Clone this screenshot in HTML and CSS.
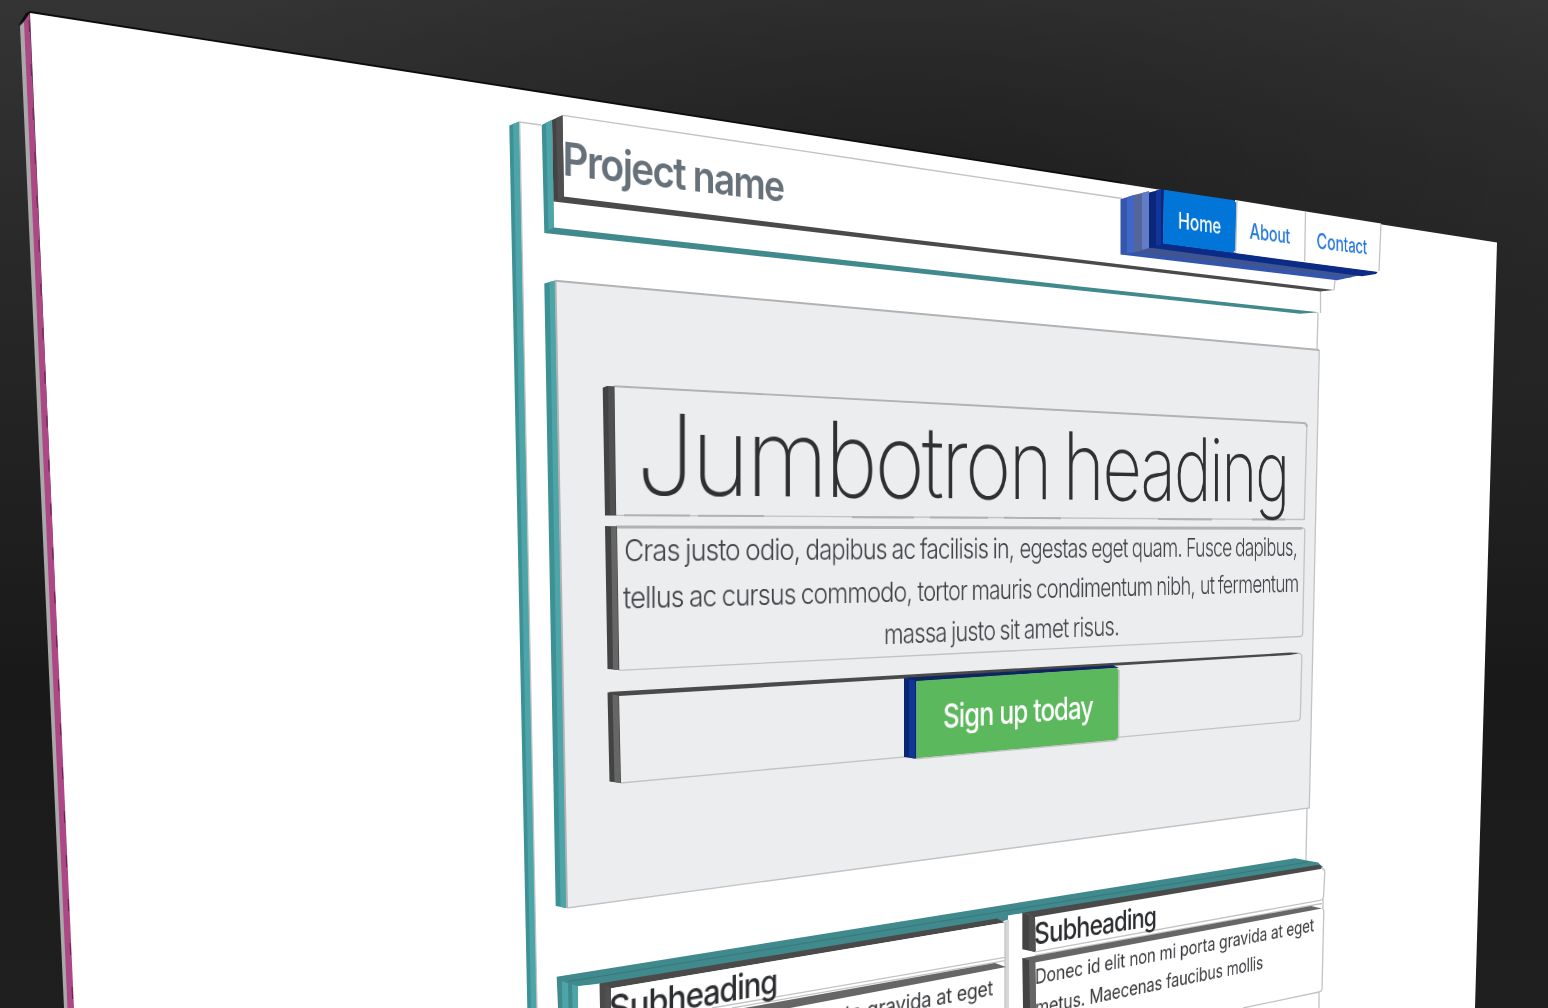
FILE: index.html
```
<!DOCTYPE html>
<html lang="en">
<head>
<meta charset="utf-8">
<title>Project name – 3D view</title>
<link rel="stylesheet" href="styles.css">
</head>
<body>
<main class="scene">
<svg class="solids" viewBox="0 0 1548 1008" width="1548" height="1008" aria-hidden="true">
  <!-- page -->
  <polygon class="void" points="18,26 26,13 30,11 1122,182 1122,190 30,15"/>
  <polygon class="paper-side" points="20,26 25,21 69,1008 64,1008"/>
  <polygon class="page" points="30,13 1497,242.5 1475,1008 73,1008"/>
  <polygon class="magenta" points="24,22 29.5,13 74,1008 67.5,1008"/>
  <path class="magenta-edge" d="M29,20 L73,1008"/>
  <!-- container -->
  <path class="line" d="M519,122 L541,125 M1318,313 L1317,350 M1307,808 L1306,860"/>
  <polygon class="teal-dark" points="509.3,125.5 519.3,121.5 537,1008 527.3,1008"/>
  <polygon class="teal" points="513,124 519,121.7 536.5,1008 531,1008"/>
  <path class="line" d="M519.7,122 L537,1008"/>
  <!-- header -->
  <polygon class="white" points="552,120 1320,240 1320,312 554,228"/>
  <polygon class="teal-dark" points="541.7,125 551.7,120 554,229 544.3,233"/>
  <polygon class="teal" points="546,123 551.7,120 554,228 548.5,230"/>
  <polygon class="teal-floor" points="544,233 554,227.5 900,266.2 1080,286.5 1319,312.3 1300,313.8 1080,290.5 900,271.3"/>
  <path class="line" d="M1320.5,291 V313"/>
  <polygon class="white" points="563,115.5 1335,231 1334,290 563.5,197"/>
  <path class="line" d="M563,115.3 L900,165.5 L1122,198.5 M1335,280 L1334,290.5"/>
  <polygon class="gray-dark" points="552,120 562.5,115.3 564,198 553.5,201.5"/>
  <polygon class="gray-mid" points="556,118.3 562.5,115.3 564,197 558,199"/>
  <polygon class="gray-floor" points="553.5,201.5 563.5,196.5 900,238 1080,259.5 1334,290 1320,291.5 1080,263 900,242.2"/>
  <!-- navigation -->
  <polygon class="nav-floor-a" points="1120.5,254.5 1134,251 1352,277 1337,280.3"/>
  <polygon class="nav-floor-b" points="1134,252.5 1149,246 1365,274 1350,277.5"/>
  <polygon class="nav-floor-c" points="1149,247.5 1163,243 1378,271.5 1376,274 1362,276.2"/>
  <polygon class="nav-a" points="1120.5,199.3 1134,195 1134,252.5 1120.5,254.5"/>
  <polygon class="nav-a-lit" points="1127,197.2 1134,195 1134,252.5 1127,253.5"/>
  <polygon class="nav-b" points="1134,195 1149,191.3 1149,248 1134,252"/>
  <polygon class="nav-b-lit" points="1142,193 1149,191.3 1149,248 1142,250"/>
  <polygon class="nav-c" points="1149,192.5 1164,188.8 1163.5,244.5 1149,248"/>
  <polygon class="nav-c-lit" points="1156,190.5 1161,189.3 1161,245 1156,246"/>
  <polygon class="white" points="1235,200 1381,223.5 1378.5,272 1235,253"/>
  <polygon class="home" points="1164,189.7 1234,200.3 1236.5,203 1235.5,250 1233,252.8 1163,243.5"/>
  <path class="line" d="M1237,201 L1235.7,253 M1305.5,212 L1304.7,261 M1381,224 L1379,271"/>
  <!-- jumbotron -->
  <polygon class="jumbo" points="555,281 1319,350 1309,808 567,908"/>
  <path class="line strong" d="M555,280.8 L1319,350"/>
  <path class="line" d="M1319.3,350 L1309.3,808 L567,908"/>
  <polygon class="teal-dark" points="544.3,283.5 555,280.5 567,908 555.7,906"/>
  <polygon class="teal" points="549.5,282 554.5,280.7 566,908 560.5,907"/>
  <path class="line strong" d="M555.5,281 L567,908"/>
  <!-- heading box -->
  <path class="line strong" d="M614,386.3 L1304,423 Q1307,423.5 1306.8,427"/>
  <path class="line" d="M1306.8,427 L1304.3,519.5 L616,515.3"/>
  <path class="line strong" d="M624,515.3 L690,515.5 M698,515.7 L764,516 M852,517.2 L914,517.5 M930,517.5 L988,517.8 M1004,517.8 L1061,518.3 M1158,519 L1212,519.5 M1252,519.5 L1285,519.5"/>
  <polygon class="gray-dark" points="602.7,387.8 607,386 614.5,386.5 616.2,515.5 605,515.5"/>
  <polygon class="gray-mid" points="608,387 614,386.5 615.5,515 610,515"/>
  <!-- lead box -->
  <path class="line heavy" d="M616,527 L1302,528.3"/>
  <path class="line" d="M1302,528 Q1305,528 1304.8,531 L1302.6,634 Q1302.4,636.5 1300,636.5 L619,670.3"/>
  <polygon class="gray-dark" points="605,526 617,526.5 619.3,670 607.5,669"/>
  <polygon class="gray-lit" points="611,526.5 616.5,526.5 618.5,670 613,669.5"/>
  <!-- action box -->
  <polygon class="gray-ceiling" points="607.5,692 1290,652.6 1301,653 1290,655 619,696"/>
  <path class="line" d="M1298,653.3 Q1302,653.5 1301.8,657 L1300.3,718 Q1300,720.5 1297,720.9 L620.5,783"/>
  <polygon class="gray-dark" points="607.5,692.5 619,694 621,783 609.5,781.5"/>
  <polygon class="gray-lit" points="612.5,694.5 618.5,695.5 620.3,783 614.5,782"/>
  <polygon class="navy-ceiling" points="904,677.8 1113,665.3 1119,668 916,681.5"/>
  <polygon class="navy" points="904,678 916.5,680 916.5,758.7 904,757"/>
  <polygon class="navy-lit" points="909,679.5 915,680 915,758.5 909,757.7"/>
  <polygon class="green" points="916.5,681 1116,667.8 1118.7,670 1118,737.5 1115.5,740 916.5,758.3"/>
  <path class="line" d="M916.5,758.8 L1115,740.5 Q1118.6,740 1118.7,737 L1119.2,670"/>
  <!-- content row -->
  <polygon class="teal-floor" points="556.7,976.8 1295,858.3 1318,862.5 1323,867 1023,914 1004,921 600,985 578,986 578,1008 558,1008"/>
  <path class="teal-rib" d="M568,981.5 L1308,862"/>
  <polygon class="teal" points="562,981 568,983.5 568.5,1008 562.3,1008"/>
  <polygon class="teal" points="572,984.5 578,986 578.3,1008 572.5,1008"/>
  <polygon class="white" points="578,986.3 600,983.5 600,1008 578.3,1008"/>
  <polygon class="white" points="1008,915.5 1023,913 1023,1008 1008,1008"/>
  <path class="line wide" d="M1007,920 V1008"/>
  <!-- left column -->
  <polygon class="gray-ceiling" points="599.5,983.5 800,951 997,918.5 1005,922.5 800,957 611,988.5 611,1008 600,1008"/>
  <polygon class="gray-mid" points="605,986 611,988 611.3,1008 605.3,1008"/>
  <polygon class="white" points="611,988.3 1005,922.5 1005,1008 611,1008"/>
  <path class="line" d="M1005,922 V1008 M1005,957.3 L712,1008 M1005,960.7 L732,1008"/>
  <polygon class="gray-lit" points="744,1008 995,963 1006,967 790,1008"/>
  <!-- right column -->
  <polygon class="gray-ceiling" points="1022.3,912.8 1319,864.8 1323.5,868.5 1035,917"/>
  <polygon class="gray-dark" points="1022.3,912.7 1035,916.5 1035.7,952 1022.3,949.3"/>
  <polygon class="gray-mid" points="1029,915 1035,916.5 1035.5,952 1029,950.5"/>
  <path class="line" d="M1321,868 Q1325,869 1324.8,873 L1323.5,897 Q1323,900 1320,900.3 L1035,951.8 M1035,955.5 L1322,903.5 M1323,899 V908"/>
  <polygon class="gray-lit" points="1022.3,958.3 1311,906 1322,908.5 1035,962.5"/>
  <polygon class="gray-dark" points="1022.3,958 1035.2,962 1036,1008 1023,1008"/>
  <polygon class="gray-lit" points="1029,960 1035.2,962 1036,1008 1030,1008"/>
  <path class="line" d="M1322,907.5 Q1324,909 1323.8,912 L1322,989 Q1321.7,991.5 1319,992 L1243,1008 M1319,992 V1008"/>
</svg>

<header>
  <h3 class="plane title" data-quad="562.5,141.5 783.5,171 783.5,201.8 562.5,174.8">Project name</h3>
  <nav>
    <span class="plane nav on" data-quad="1178,212.5 1221,218.9 1221,234.1 1178,228.5">Home</span>
    <span class="plane nav" data-quad="1249.5,223.3 1290,229.3 1290,243.8 1249.5,238.7">About</span>
    <span class="plane nav" data-quad="1316.5,233.2 1367,240.4 1367,254.5 1316.5,248.6">Contact</span>
  </nav>
</header>
<section>
  <h1 class="plane display" data-quad="636,411.8 1288,441.2 1288,502.1 636,494.7">Jumbotron heading</h1>
  <p>
    <span class="plane lead" data-quad="624,539 800,538.7 800,559.9 624,561.3">Cras justo odio,</span>
    <span class="plane lead" data-quad="805.5,538.7 1014,538.3 1014,558.2 805.5,559.9">dapibus ac facilisis in,</span>
    <span class="plane lead" data-quad="1019.5,538.3 1182,538 1182,556.8 1019.5,558.2">egestas eget quam.</span>
    <span class="plane lead" data-quad="1186,538 1297,537.8 1297,555.9 1186,556.8">Fusce dapibus,</span>
    <span class="plane lead" data-quad="623,586.5 912,581.3 912,601.4 623,608.6">tellus ac cursus commodo,</span>
    <span class="plane lead" data-quad="917.5,581.2 1195,576.2 1195,594.4 917.5,601.3">tortor mauris condimentum nibh,</span>
    <span class="plane lead" data-quad="1200,576.1 1298.5,574.3 1298.5,591.8 1200,594.2">ut fermentum</span>
    <span class="plane lead" data-quad="884,624 1119,616.2 1119,635.3 884,644.3">massa justo sit amet risus.</span>
  </p>
  <span class="plane action" data-quad="943,705.3 1093,696.4 1093,718.7 943,728.8">Sign up today</span>
</section>
<section>
  <h4 class="plane sub" data-quad="608.5,996 777,968 777,992.5 608.5,1023">Subheading</h4>
  <p class="plane body" data-quad="610,1047 993,980 993,995.5 610,1065">Donec id elit non mi porta gravida at eget</p>
  <h4 class="plane sub" data-quad="1034,923.2 1156,905.5 1156,925.3 1034,944.8">Subheading</h4>
  <p class="plane body" data-quad="1035,970 1314,918.3 1314,931.5 1035,984.6">Donec id elit non mi porta gravida at eget</p>
  <p class="plane body" data-quad="1035,1000.8 1263,955.5 1263,969 1035,1015.7">metus. Maecenas faucibus mollis</p>
</section>
</main>
<script src="planes.js"></script>
</body>
</html>
```
FILE: styles.css
```
* { box-sizing: border-box; }
body { margin: 0; background: #1c1c1c; font-family: Inter, "Liberation Sans", sans-serif; }
.scene {
  position: relative;
  width: 1548px;
  height: 1008px;
  overflow: hidden;
  background:
    radial-gradient(ellipse 800px 330px at 900px 190px, rgba(0,0,0,.3), rgba(0,0,0,0)),
    linear-gradient(#343434 0%, #292929 25%, #191919 68%, #1f1f1f 100%);
}
.solids { display: block; }

.void { fill: #0c0c0c; }
.page, .white { fill: #fff; }
.paper-side { fill: #a9a9a9; }
.magenta { fill: #ad4785; }
.magenta-edge { stroke: #5f2549; stroke-width: 1; stroke-dasharray: 12 32; fill: none; }
.teal { fill: #4ca5a9; }
.teal-dark { fill: #3d9094; }
.teal-floor { fill: #40898c; }
.teal-rib { fill: none; stroke: #38797c; stroke-width: 1; }
.gray-dark { fill: #434343; }
.gray-mid { fill: #505050; }
.gray-lit { fill: #666; }
.gray-floor, .gray-ceiling { fill: #4a4a4a; }
.nav-a { fill: #3557ab; }
.nav-a-lit { fill: #4066c8; }
.nav-b { fill: #53659b; }
.nav-b-lit { fill: #627cc6; }
.nav-c { fill: #0b277c; }
.nav-c-lit { fill: #10369c; }
.nav-floor-a { fill: #3355ad; }
.nav-floor-b { fill: #3f5592; }
.nav-floor-c { fill: #0b2b86; }
.home { fill: #0275d8; }
.jumbo { fill: #ecedef; }
.navy { fill: #0b2671; }
.navy-lit { fill: #103597; }
.navy-ceiling { fill: #0e2560; }
.green { fill: #5cb85c; }
.line { fill: none; stroke: #c2c3c4; stroke-width: 1.3; }
.strong { stroke: #b0b2b3; stroke-width: 1.9; }
.heavy { stroke: #b0b3b3; stroke-width: 3; }
.wide { stroke: #d6d6d6; stroke-width: 4; }

/* Every label lies on its own plane; planes.js sets its matrix. */
.plane {
  position: absolute;
  left: 0;
  top: 0;
  margin: 0;
  line-height: 1;
  white-space: nowrap;
  transform-origin: 0 0;
  font-weight: 400;
}
.title { font-size: 46px; font-weight: 600; letter-spacing: -.04em; color: #66717a; }
.nav { font-size: 21px; font-weight: 500; letter-spacing: -.01em; color: #2578dc; }
.on { color: #fff; }
.display { font-size: 110px; font-weight: 200; letter-spacing: -.03em; word-spacing: -.08em; color: #2e3032; }
.lead { font-size: 29px; font-weight: 300; letter-spacing: -.035em; word-spacing: -.04em; color: #404346; }
.action { font-size: 32px; font-weight: 500; letter-spacing: -.035em; color: #fff; }
.sub { font-size: 31px; font-weight: 500; letter-spacing: -.035em; color: #2b2d30; }
.body { font-size: 20px; letter-spacing: -.01em; color: #36383b; }
```
FILE: planes.js
```
// Projects each label so that its cap line and baseline land on the
// four corners in data-quad (top left, top right, bottom right, bottom left).
const CAP = 0.137, BASE = 0.864;

function squareToQuad(p) {
  const [a, b, c, d] = p;
  const dx1 = b[0] - c[0], dx2 = d[0] - c[0], sx = a[0] - b[0] + c[0] - d[0];
  const dy1 = b[1] - c[1], dy2 = d[1] - c[1], sy = a[1] - b[1] + c[1] - d[1];
  const det = dx1 * dy2 - dx2 * dy1;
  const g = (sx * dy2 - dx2 * sy) / det;
  const h = (dx1 * sy - sx * dy1) / det;
  return [
    [b[0] - a[0] + g * b[0], d[0] - a[0] + h * d[0], a[0]],
    [b[1] - a[1] + g * b[1], d[1] - a[1] + h * d[1], a[1]],
    [g, h, 1]
  ];
}

for (const el of document.querySelectorAll('.plane')) {
  const quad = el.dataset.quad.split(' ').map(s => s.split(',').map(Number));
  const m = squareToQuad(quad);
  const size = parseFloat(getComputedStyle(el).fontSize);
  const w = el.getBoundingClientRect().width;
  const top = CAP * size, height = (BASE - CAP) * size;
  const r = m.map(([x, y, k]) => [x / w, y / height, k - y * top / height]);
  const n = r[2][2];
  const q = r.map(row => row.map(v => v / n));
  el.style.transform = `matrix3d(${[
    q[0][0], q[1][0], 0, q[2][0],
    q[0][1], q[1][1], 0, q[2][1],
    0, 0, 1, 0,
    q[0][2], q[1][2], 0, 1
  ].map(v => v.toFixed(10)).join(',')})`;
}
```
